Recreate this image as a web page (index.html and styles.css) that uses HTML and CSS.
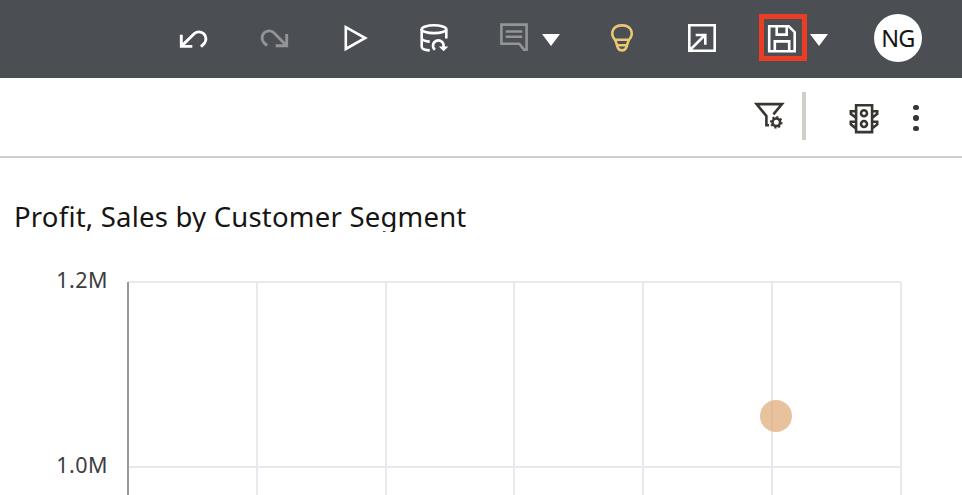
FILE: index.html
```html
<!DOCTYPE html>
<html lang="en">
<head>
<meta charset="utf-8">
<title>Profit, Sales by Customer Segment</title>
<link rel="stylesheet" href="styles.css">
</head>
<body>
<header class="toolbar">
  <svg class="icon undo" viewBox="0 0 32 32"><path d="M3.3 12.7V24.4H14.3M3.3 24.4L16.4 11.5A7 7 0 0 1 26.4 21.2L23 24.8"/></svg>
  <svg class="icon redo" viewBox="0 0 32 32"><path d="M28.7 12V23.7H17.7M28.7 23.7L15.6 10.5A7 7 0 0 0 5.6 20.2L9 23.6"/></svg>
  <svg class="icon play" viewBox="0 0 32 32"><path d="M7.8 5.2V27L27.2 16Z"/></svg>
  <svg class="icon data" viewBox="0 0 32 32"><ellipse cx="16" cy="7.2" rx="12.3" ry="3.9"/><path d="M3.7 7.2V24.8C3.7 27 7 28.2 11.7 28.4M28.3 7.2V16.5M3.7 16.4C4.5 18.6 7.5 19.4 11.7 19.6M16.9 27.8A5.3 5.3 0 1 1 25.6 23.5V25"/><path class="head" d="M20.8 24.4H30.4L25.6 29.2Z"/></svg>
  <svg class="icon comment" viewBox="0 0 32 32"><path d="M3.4 2.6H28.6V27.6H26L21.3 21.7H3.4ZM7.7 9.5H24.3M7.7 14.7H24.3"/></svg>
  <svg class="caret" viewBox="0 0 18 12"><path d="M0 0H18L9 12Z"/></svg>
  <svg class="icon bulb" viewBox="0 0 32 32"><path d="M8.8 17.5C3.7 11.5 6.5 3.4 16 3.4S28.3 11.5 23.2 17.5C21.8 19.5 21.3 22.5 20.5 25C19.7 27.3 18.5 28.4 16 28.4S12.3 27.3 11.5 25C10.7 22.5 10.2 19.5 8.8 17.5ZM8.5 17.7H23.5M11 23.2H21"/></svg>
  <svg class="icon export" viewBox="0 0 32 32"><path d="M3.3 3.3H28.7V28.7H3.3ZM4 28L19 13M9.7 13H19.3V22.7"/></svg>
  <div class="save"><svg class="icon" viewBox="0 0 32 32"><path d="M3.2 3.2H22.7L28.7 9.2V28.3H3.2ZM10.7 3.2V11.6H20.7V3.2M8.8 28V18.4H23.2V28"/></svg></div>
  <svg class="caret save-caret" viewBox="0 0 18 12"><path d="M0 0H18L9 12Z"/></svg>
  <div class="avatar">NG</div>
</header>
<div class="subbar">
  <svg class="icon filter" viewBox="0 0 32 32"><path d="M16 25.2H13.4V16L3.6 4.1H29L20.4 14.4"/><circle cx="23.3" cy="22.3" r="3.8"/><circle class="teeth" cx="23.3" cy="22.3" r="5.3" pathLength="48"/></svg>
  <div class="divider"></div>
  <svg class="icon traffic" viewBox="0 0 32 32"><path d="M8.1 3.2H24.1V30.1H8.1ZM24 9.2H29.2V11.8L24.6 15.5M8.2 9.2H2.8V11.8L7.6 15.5M24 19.8H29.2V22.4L24.6 26.1M8.2 19.8H2.8V22.4L7.6 26.1"/><circle cx="16" cy="11.3" r="3"/><circle cx="16" cy="22" r="3"/></svg>
  <div class="more"><i></i><i></i><i></i></div>
</div>
<main>
  <h1>Profit, Sales by Customer Segment</h1>
  <div class="chart">
    <div class="labels"><span>1.2M</span><span>1.0M</span></div>
    <svg class="plot" viewBox="0 0 775 214">
      <path class="grid" d="M1 1H774M1 186H773M130 2V214M259 2V214M387 2V214M516 2V214M645 2V214M774 1V214"/>
      <path class="axis" d="M1 1V214"/>
      <circle cx="649" cy="135" r="16"/>
    </svg>
  </div>
</main>
</body>
</html>
```
FILE: styles.css
```css
* { box-sizing: border-box; }
body {
  margin: 0;
  height: 495px;
  overflow: hidden;
  background: #fff;
  color: #161513;
  font-family: "Noto Sans", sans-serif;
}
svg { display: block; flex: none; }
.toolbar {
  display: flex;
  align-items: center;
  width: 961.5px;
  height: 78px;
  padding: 0 0 2px 178px;
  background: #4b4e53;
}
.icon {
  width: 32px;
  height: 32px;
  fill: none;
  stroke: #fff;
  stroke-width: 2.6;
}
.undo, .redo { stroke-width: 2.9; }
.redo { margin-left: 48px; stroke: #929497; }
.play { margin-left: 48px; }
.data { margin-left: 48px; }
.data .head { fill: #fff; stroke: none; }
.comment { margin-left: 48px; stroke: #929497; }
.caret { width: 18px; height: 12px; margin: 4px 0 0 12px; fill: #fff; }
.bulb { margin-left: 46px; stroke: #e9c773; }
.export { margin-left: 48px; }
.save {
  display: flex;
  flex: none;
  width: 48px;
  height: 47px;
  margin: -2px 0 0 40.5px;
  padding: 4.5px 0 0 2.5px;
  border: 5px solid #ea3d24;
}
.save-caret { margin-left: 3.5px; }
.avatar {
  flex: none;
  width: 48px;
  height: 48px;
  margin-left: 46px;
  border-radius: 50%;
  background: #fff;
  font-size: 23.5px;
  line-height: 49px;
  letter-spacing: -0.7px;
  text-align: center;
}
.subbar {
  display: flex;
  height: 80px;
  padding-left: 753px;
  border-bottom: 2px solid #d1cdc8;
}
.subbar .icon { stroke: #393632; }
.filter { margin-top: 22px; }
.filter .teeth { stroke-width: 2; stroke-dasharray: 3 3; }
.divider { width: 4px; height: 48px; margin: 14px 0 0 17px; background: #d1cdc8; }
.traffic { margin: 24px 0 0 42px; }
.more { display: flex; flex-direction: column; gap: 5.2px; margin: 26.6px 0 0 33px; }
.more i { width: 5.5px; height: 5.5px; border-radius: 50%; background: #393632; }
h1 {
  height: 34px;
  margin: 40px 0 0 14px;
  overflow: hidden;
  font-size: 27.5px;
  font-weight: 400;
  line-height: 38px;
  letter-spacing: 0.21px;
  white-space: nowrap;
}
.chart { display: flex; margin-top: 49px; }
.labels {
  display: flex;
  flex-direction: column;
  gap: 153px;
  width: 108px;
  margin: -17px 19px 0 0;
  color: #3d3d3f;
  font-size: 21.5px;
  line-height: 32px;
  letter-spacing: 0.5px;
  text-align: right;
}
.plot { width: 775px; height: 214px; fill: none; stroke-width: 2; }
.grid { stroke: #e6e9ee; }
.axis { stroke: #98999b; }
.plot circle { fill: #dea16a; fill-opacity: 0.66; }
```
